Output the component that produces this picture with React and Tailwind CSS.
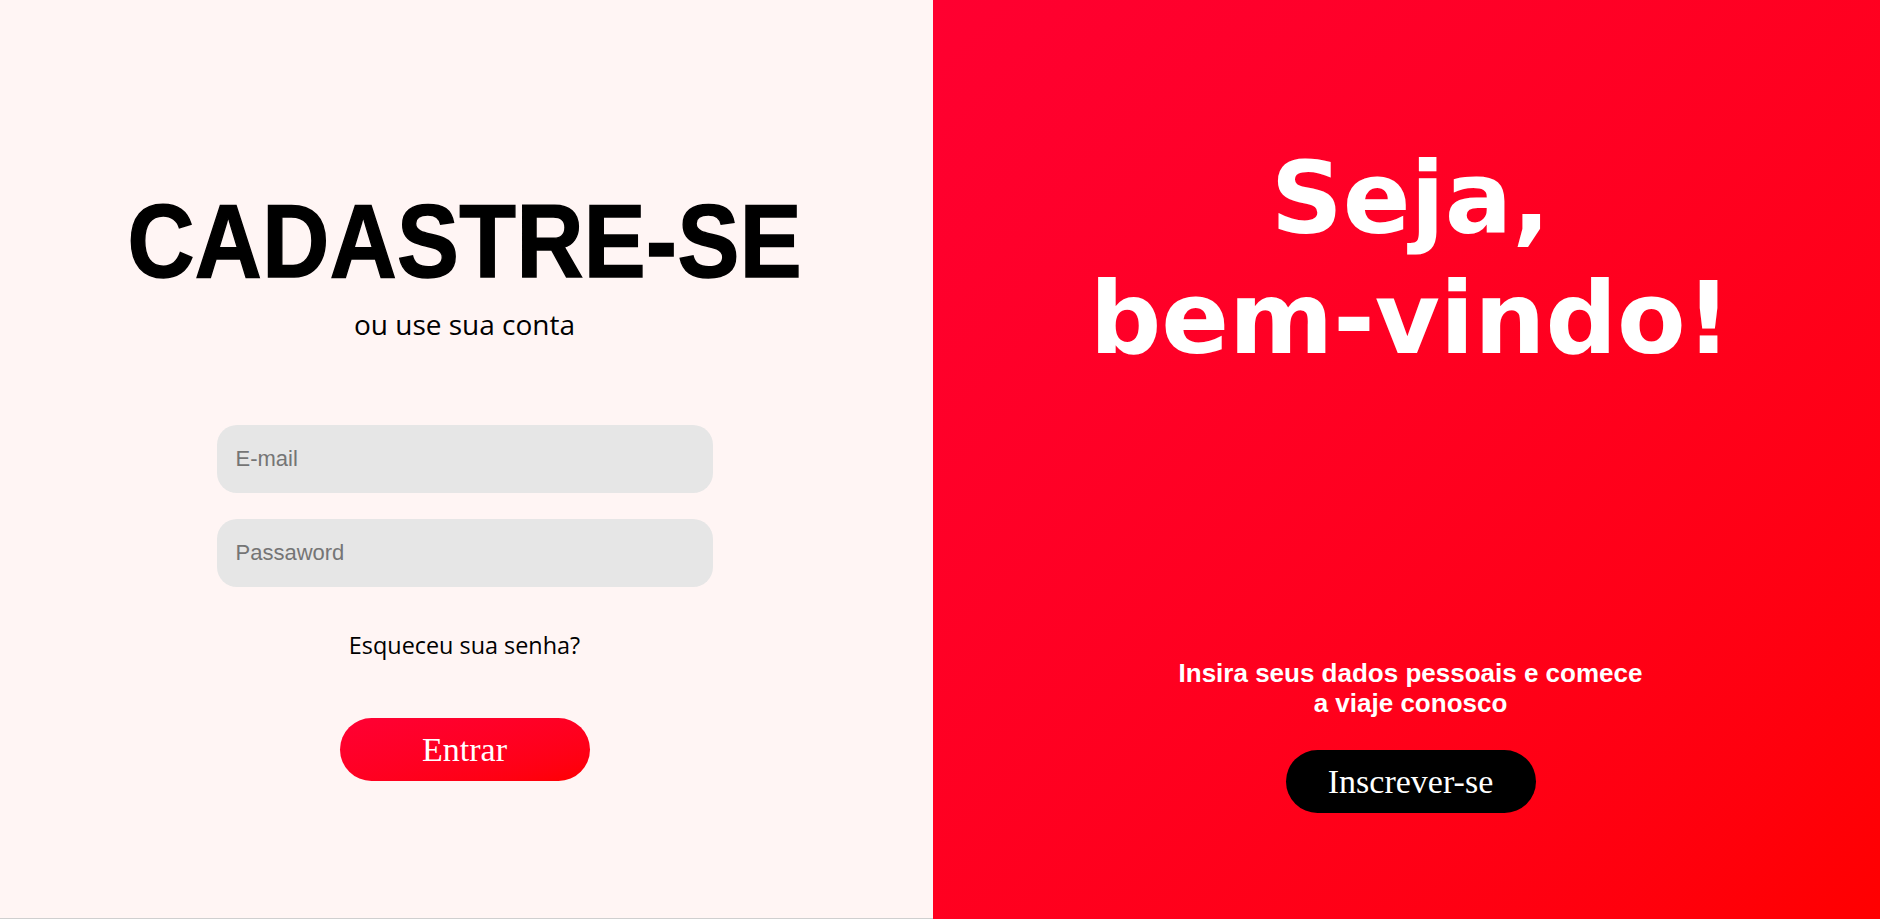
import React from "react";

function LoginPanel() {
  return (
    <div className="w-[933px] h-[919px] shrink-0 bg-[#fff5f4] border-b border-[#cfcfcf] flex flex-col items-center pr-[4px]">
      {/* heading is a slightly condensed heavy face in the original */}
      <h1 className="mt-[190px] text-[103px] leading-none font-bold tracking-[0.5px] scale-x-[0.9] text-black whitespace-nowrap [-webkit-text-stroke:1.5px_black] font-['Liberation_Sans',Arial,sans-serif]">
        CADASTRE-SE
      </h1>
      <p className="mt-[14px] text-[28px] leading-[34px] text-black font-['Open_Sans',sans-serif]">
        ou use sua conta
      </p>

      <form className="mt-[84px] flex flex-col gap-[26px] items-center" onSubmit={(e) => e.preventDefault()}>
        <input
          type="email"
          placeholder="E-mail"
          className="w-[496px] h-[68px] rounded-[20px] bg-[#e6e6e6] px-[19px] text-[22px] text-black placeholder:text-[#757575] outline-none font-['Liberation_Sans',Arial,sans-serif]"
        />
        <input
          type="password"
          placeholder="Passaword"
          className="w-[496px] h-[68px] rounded-[20px] bg-[#e6e6e6] px-[19px] text-[22px] text-black placeholder:text-[#757575] outline-none font-['Liberation_Sans',Arial,sans-serif]"
        />
      </form>

      <a href="#" className="mt-[42px] text-[23.4px] leading-[32px] text-black font-['Open_Sans',sans-serif]">
        Esqueceu sua senha?
      </a>

      <button className="mt-[57px] w-[250px] h-[63px] rounded-full bg-linear-to-br from-[#ff0033] to-[#ff0000] text-white text-[34px] font-['Liberation_Serif','Times_New_Roman',serif]">
        Entrar
      </button>
    </div>
  );
}

function WelcomePanel() {
  return (
    <div className="flex-1 h-[919px] bg-linear-to-br from-[#ff0030] to-[#ff0000] flex flex-col items-center pl-[8px]">
      <h2 className="mt-[139px] text-[100px] leading-[120px] font-bold text-white text-center font-['DejaVu_Sans',Verdana,sans-serif]">
        Seja,
        <br />
        bem-vindo!
      </h2>
      <p className="mt-[279px] text-[26px] leading-[30px] font-bold text-white text-center font-['Liberation_Sans',Arial,sans-serif]">
        Insira seus dados pessoais e comece
        <br />
        a viaje conosco
      </p>
      <button className="mt-[32px] w-[250px] h-[63px] rounded-full bg-black text-white text-[34px] font-['Liberation_Serif','Times_New_Roman',serif]">
        Inscrever-se
      </button>
    </div>
  );
}

export default function App() {
  return (
    <div className="w-full h-[919px] flex overflow-hidden">
      <LoginPanel />
      <WelcomePanel />
    </div>
  );
}
